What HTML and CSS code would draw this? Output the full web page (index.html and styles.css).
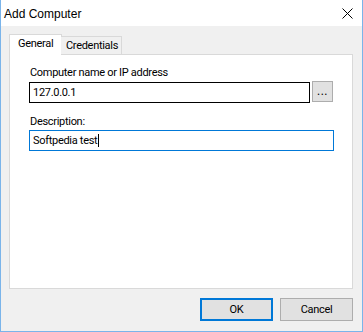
FILE: index.html
```html
<!DOCTYPE html>
<html>
<head>
  <meta charset="utf-8">
  <title>Add Computer</title>
  <link rel="stylesheet" href="styles.css">
</head>
<body>
<div class="win">
  <div class="win-title">
    <span class="win-caption">Add Computer</span>
    <span class="win-close">
      <svg width="11" height="11" viewBox="0 0 11 11"><path d="M0.5 0.5L10.5 10.5M10.5 0.5L0.5 10.5" stroke="#000" stroke-width="1"/></svg>
    </span>
  </div>
  <div class="win-body">
    <div class="tabs">
      <div class="tab tab-active">General</div>
      <div class="tab">Credentials</div>
    </div>
    <div class="tab-panel">
      <div class="field-label">Computer name or IP address</div>
      <div class="field-row">
        <div class="textbox textbox-host">127.0.0.1</div>
        <div class="btn btn-browse">...</div>
      </div>
      <div class="field-label field-label-2">Description:</div>
      <div class="textbox textbox-focus">Softpedia test<span class="caret"></span></div>
    </div>
    <div class="actions">
      <div class="btn btn-dialog btn-default">OK</div>
      <div class="btn btn-dialog">Cancel</div>
    </div>
  </div>
</div>
</body>
</html>
```

FILE: styles.css
```css
*,
*::before,
*::after {
  box-sizing: border-box;
}

body {
  margin: 0;
  font-family: Roboto, "Liberation Sans", sans-serif;
  font-size: 11px;
  letter-spacing: -0.3px;
  color: #000;
}

.win {
  width: 363px;
  height: 332px;
  border: 1px solid #7ab4ea;
  border-top: none;
  display: flex;
  flex-direction: column;
  background: #f0f0f0;
}

.win-title {
  height: 26px;
  background: #fff;
  display: flex;
  align-items: center;
  justify-content: space-between;
  padding-left: 3px;
  padding-right: 9px;
}

.win-caption {
  font-family: "Liberation Sans", sans-serif;
  font-size: 12px;
  letter-spacing: 0;
  margin-top: 1px;
}

.win-close {
  display: flex;
  margin-top: 1px;
}

.win-body {
  flex: 1;
  display: flex;
  flex-direction: column;
  padding: 8px 9px 10px 8px;
}

.tabs {
  display: flex;
  align-items: flex-end;
  height: 20px;
  position: relative;
  z-index: 1;
}

.tab {
  width: 61px;
  height: 18px;
  padding-left: 5px;
  border: 1px solid #d9d9d9;
  border-bottom: none;
  border-left: none;
  background: #f0f0f0;
  line-height: 17px;
}

.tab-active {
  width: 53px;
  height: 21px;
  margin-bottom: -1px;
  margin-right: -1px;
  background: #fff;
  border-left: 1px solid #d9d9d9;
  border-right: 1px solid #d9d9d9;
  padding-left: 8px;
  line-height: 18px;
}

.tab-panel {
  height: 235px;
  background: #fff;
  border: 1px solid #d9d9d9;
  padding: 10px 19px 0 19px;
}

.field-label {
  height: 15px;
  line-height: 15px;
  padding-left: 1px;
  margin-bottom: 2px;
}

.field-label-2 {
  margin-top: 11px;
  margin-bottom: 1px;
}

.field-row {
  display: flex;
  gap: 2px;
  align-items: flex-start;
}

.textbox {
  height: 21px;
  line-height: 19px;
  padding-left: 3px;
  background: #fff;
  border: 1px solid #000;
  white-space: nowrap;
}

.textbox-host {
  width: 281px;
}

.textbox-focus {
  width: 305px;
  border-color: #0078d7;
  display: flex;
  align-items: center;
}

.caret {
  display: inline-block;
  width: 1px;
  height: 13px;
  background: #000;
  margin-left: 1px;
}

.btn {
  background: #e1e1e1;
  border: 1px solid #adadad;
  display: flex;
  align-items: center;
  justify-content: center;
}

.btn-browse {
  width: 21px;
  height: 21px;
  margin-top: -1px;
  padding-bottom: 2px;
  letter-spacing: 0.5px;
  font-size: 12px;
}

.actions {
  margin-top: auto;
  display: flex;
  justify-content: flex-end;
  gap: 7px;
}

.btn-dialog {
  width: 73px;
  height: 23px;
}

.btn-default {
  border: 2px solid #0078d7;
}
```
